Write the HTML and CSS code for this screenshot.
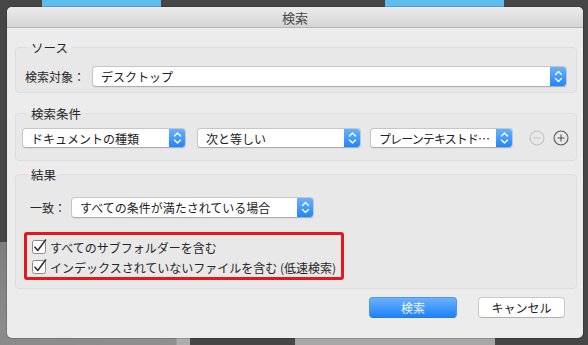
FILE: index.html
```html
<!DOCTYPE html>
<html lang="ja">
  <head>
    <meta charset="UTF-8" />
    <meta name="viewport" content="width=device-width, initial-scale=1.0" />
    <title>検索</title>
    <link rel="stylesheet" href="styles.css">
  </head>
  <body>
    <div class="desk">
      <!-- 背景のウィンドウ -->
      <div class="bg-win bg-blue-a"></div>
      <div class="bg-win bg-blue-b"></div>
      <div class="bg-win bg-left"></div>
      <div class="bg-win bg-bottom-a"></div>
      <div class="bg-win bg-bottom-b"></div>

      <div class="dialog">
        <div class="titlebar">検索</div>

        <div class="dialog-body">
          <fieldset class="group">
            <legend>ソース</legend>
            <div class="row row-source">
              <span class="field-label">検索対象：</span>
              <div class="popup popup-fill">
                <span class="popup-text">デスクトップ</span>
                <span class="stepper">
                  <svg viewBox="0 0 17 21"><path d="M5.5 8.5 8.5 5.5 11.5 8.5M5.5 12.5 8.5 15.5 11.5 12.5" /></svg>
                </span>
              </div>
            </div>
          </fieldset>

          <fieldset class="group">
            <legend>検索条件</legend>
            <div class="row row-criteria">
              <div class="popup popup-kind">
                <span class="popup-text">ドキュメントの種類</span>
                <span class="stepper">
                  <svg viewBox="0 0 17 20"><path d="M5.5 8 8.5 5 11.5 8M5.5 12 8.5 15 11.5 12" /></svg>
                </span>
              </div>
              <div class="popup popup-op">
                <span class="popup-text">次と等しい</span>
                <span class="stepper">
                  <svg viewBox="0 0 17 20"><path d="M5.5 8 8.5 5 11.5 8M5.5 12 8.5 15 11.5 12" /></svg>
                </span>
              </div>
              <div class="popup popup-value">
                <span class="popup-text">プレーンテキストド…</span>
                <span class="stepper">
                  <svg viewBox="0 0 17 20"><path d="M5.5 8 8.5 5 11.5 8M5.5 12 8.5 15 11.5 12" /></svg>
                </span>
              </div>
              <svg class="round-btn btn-minus" viewBox="0 0 16 16">
                <circle cx="8" cy="8" r="7" />
                <path d="M4.5 8h7" />
              </svg>
              <svg class="round-btn btn-plus" viewBox="0 0 16 16">
                <circle cx="8" cy="8" r="7" />
                <path d="M4.5 8h7M8 4.5v7" />
              </svg>
            </div>
          </fieldset>

          <fieldset class="group group-result">
            <legend>結果</legend>
            <div class="row row-match">
              <span class="field-label match-label">一致：</span>
              <div class="popup popup-match">
                <span class="popup-text">すべての条件が満たされている場合</span>
                <span class="stepper">
                  <svg viewBox="0 0 17 21"><path d="M5.5 8.5 8.5 5.5 11.5 8.5M5.5 12.5 8.5 15.5 11.5 12.5" /></svg>
                </span>
              </div>
            </div>

            <div class="highlight">
              <label class="check-row">
                <svg class="checkbox" viewBox="0 0 16 16">
                  <rect x="1.5" y="1.5" width="13" height="13" rx="2" />
                  <path class="tick" d="M4 8.2 6.8 11.5 14.5 1" />
                </svg>
                <span>すべてのサブフォルダーを含む</span>
              </label>
              <label class="check-row">
                <svg class="checkbox" viewBox="0 0 16 16">
                  <rect x="1.5" y="1.5" width="13" height="13" rx="2" />
                  <path class="tick" d="M4 8.2 6.8 11.5 14.5 1" />
                </svg>
                <span>インデックスされていないファイルを含む (低速検索)</span>
              </label>
            </div>
          </fieldset>

          <div class="buttons">
            <button class="btn btn-primary">検索</button>
            <button class="btn">キャンセル</button>
          </div>
        </div>
      </div>
    </div>
  </body>
</html>
```

FILE: styles.css
```css
body {
  margin: 0;
  background: #464646;
  font-family: "Noto Sans CJK JP", "Liberation Sans", sans-serif;
  font-size: 12px;
  color: #262626;
}

.desk {
  position: relative;
  width: 588px;
  height: 345px;
  overflow: hidden;
  background: #464646;
}

/* 背景のウィンドウ */
.bg-win {
  position: absolute;
}

.bg-blue-a {
  left: 42px;
  top: 0;
  width: 119px;
  height: 10px;
  background: #5fbdec;
}

.bg-blue-b {
  left: 385px;
  top: 0;
  width: 119px;
  height: 10px;
  background: #5fbdec;
}

.bg-left {
  left: 0;
  top: 242px;
  width: 10px;
  height: 103px;
  background: linear-gradient(#7d7d7d, #8e8e8e);
}

.bg-bottom-a {
  left: 0;
  top: 330px;
  width: 190px;
  height: 15px;
  background: linear-gradient(90deg, #8a8a8a 0, #8f8f8f 176px, #adadad 177px, #adadad 190px);
}

.bg-bottom-b {
  left: 295px;
  top: 330px;
  width: 200px;
  height: 15px;
  background: #a7a7a7;
}

/* ダイアログ */
.dialog {
  position: absolute;
  left: 7px;
  top: 7px;
  width: 576px;
  height: 331px;
  background: #ececec;
  border-radius: 5px;
  box-shadow: 0 0 0 1px rgba(0, 0, 0, 0.15);
  overflow: hidden;
}

.titlebar {
  height: 20px;
  line-height: 21px;
  text-align: center;
  font-size: 13px;
  color: #4a4a4a;
  background: linear-gradient(#ebebeb, #d5d5d5);
  border-bottom: 1px solid #b4b4b4;
}

.dialog-body {
  padding: 0 6px 0 8px;
}

.group {
  margin: 12px 0 0;
  padding: 0;
  border: 1px solid #dddddd;
  border-radius: 4px;
  background: #e8e8e8;
  min-width: 0;
}

.group:first-child {
  margin-top: 11px;
}

.group legend {
  margin-left: 11px;
  padding: 0 4px;
  line-height: 17px;
  font-size: 12.5px;
  color: #262626;
}

.group-result {
  margin-top: 5px;
}

.row {
  display: flex;
  align-items: center;
}

.row-source {
  padding: 10px 9px 5px 9px;
}

.row-criteria {
  padding: 6px 0 12px 6px;
}

.row-match {
  padding: 14px 0 0 14px;
}

.field-label {
  margin-right: 7px;
  white-space: nowrap;
}

.match-label {
  margin-right: 5px;
}

/* ポップアップボタン */
.popup {
  display: flex;
  align-items: center;
  height: 21px;
  background: #fff;
  border: 1px solid #c6c6c6;
  border-bottom-color: #aeaeae;
  border-radius: 4px;
  box-sizing: border-box;
  box-shadow: 0 1px 0 rgba(0, 0, 0, 0.04);
  overflow: hidden;
}

.popup-text {
  flex: 1;
  padding-left: 8px;
  white-space: nowrap;
  overflow: hidden;
  color: #222;
}

.popup-fill {
  flex: 1;
}

.popup-kind,
.popup-op,
.popup-value {
  height: 20px;
}

.popup-kind {
  width: 164px;
}

.popup-op {
  width: 164px;
  margin-left: 11px;
}

.popup-value {
  width: 143px;
  margin-left: 9px;
}

.popup-value .popup-text {
  letter-spacing: -0.9px;
}

.popup-match {
  width: 243px;
}

.stepper {
  align-self: stretch;
  width: 17px;
  margin: -1px -1px -1px 0;
  background: linear-gradient(#6db4fb, #1d83fa);
  border-radius: 0 4px 4px 0;
}

.stepper svg {
  display: block;
  width: 17px;
  height: 100%;
  fill: none;
  stroke: #fff;
  stroke-width: 1.4;
  stroke-linecap: round;
  stroke-linejoin: round;
}

.round-btn {
  width: 16px;
  height: 16px;
  fill: none;
  stroke-width: 1.1;
}

.btn-minus {
  margin-left: 16px;
  stroke: #c2c2c2;
}

.btn-plus {
  margin-left: 8px;
  stroke: #555;
}

/* 赤枠 */
.highlight {
  margin: 14px 0 8px 8px;
  width: 320px;
  box-sizing: border-box;
  padding: 2px 0 0 5px;
  height: 48px;
  border: 3px solid #e5161c;
  border-radius: 3px;
}

.check-row {
  display: flex;
  align-items: center;
  height: 20px;
  white-space: nowrap;
}

.checkbox {
  width: 16px;
  height: 16px;
  margin: 0 3px 0 -1px;
  flex-shrink: 0;
}

.checkbox rect {
  fill: #fff;
  stroke: #8a8a8a;
  stroke-width: 1;
}

.checkbox .tick {
  fill: none;
  stroke: #333;
  stroke-width: 1.6;
  stroke-linecap: round;
  stroke-linejoin: round;
}

/* ボタン */
.buttons {
  display: flex;
  justify-content: flex-end;
  gap: 21px;
  margin-top: 8px;
  padding-right: 12px;
}

.btn {
  width: 87px;
  height: 21px;
  padding: 0;
  font-family: inherit;
  font-size: 12px;
  color: #222;
  background: #fff;
  border: 1px solid #c8c8c8;
  border-bottom-color: #b0b0b0;
  border-radius: 4px;
}

.btn-primary {
  width: 88px;
  color: #eef5ff;
  background: linear-gradient(#6cb2fb, #1d82f9);
  border-color: #4a97f0;
  border-bottom-color: #2a78e0;
}
```
